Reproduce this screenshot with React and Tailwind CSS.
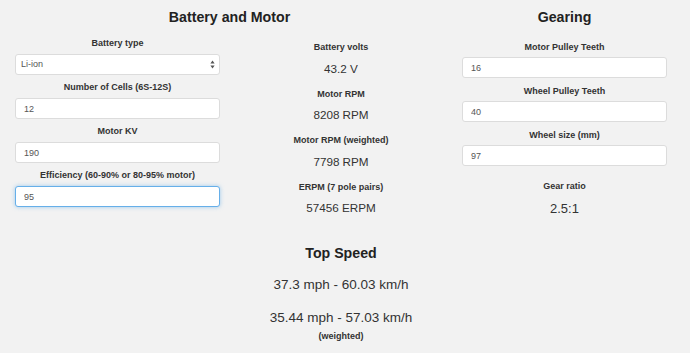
import { useState } from "react";

function Field({ label, value, onChange, focused }) {
  return (
    <div className="flex flex-col">
      <label className="h-[11px] text-center text-[9px] leading-[11px] font-bold text-[#333]">{label}</label>
      <input
        type="text"
        value={value}
        onChange={onChange}
        className={
          focused
            ? "mt-[5px] h-[21px] w-full rounded-[3px] border border-[#66afe9] bg-white px-[8px] text-[9px] text-[#555] shadow-[0_0_4px_rgba(102,175,233,0.6)] outline-none"
            : "mt-[5px] h-[21px] w-full rounded-[3px] border border-[#dcdcdc] bg-white px-[8px] text-[9px] text-[#555] outline-none"
        }
      />
    </div>
  );
}

function Stat({ label, value }) {
  return (
    <div className="flex flex-col items-center">
      <div className="h-[11px] text-[9px] leading-[11px] font-bold text-[#333]">{label}</div>
      <div className="mt-[8.5px] h-[14px] text-[11.7px] leading-[14px] text-[#333]">{value}</div>
    </div>
  );
}

export default function App() {
  const [form, setForm] = useState({
    battery: "Li-ion",
    cells: "12",
    kv: "190",
    efficiency: "95",
    motorTeeth: "16",
    wheelTeeth: "40",
    wheelSize: "97",
  });

  const set = (name) => (e) => setForm({ ...form, [name]: e.target.value });

  return (
    <div className="min-h-screen w-full bg-[#f2f2f2] font-['Liberation_Sans',Arial,sans-serif] text-[#333]">
      <div className="flex w-[682px]">
        {/* battery and motor */}
        <div className="w-[459px]">
          <h2 className="h-[26px] pt-[9px] text-center text-[14.2px] leading-[17px] font-bold text-[#222]">Battery and Motor</h2>
          <div className="flex">
            <div className="flex w-[235px] flex-col gap-[7px] px-[15px] pt-[12px]">
              <div className="flex flex-col">
                <label className="h-[11px] text-center text-[9px] leading-[11px] font-bold text-[#333]">Battery type</label>
                <div className="relative mt-[5px] h-[21px]">
                  <select
                    value={form.battery}
                    onChange={set("battery")}
                    className="block h-[21px] w-full appearance-none rounded-[3px] border border-[#dcdcdc] bg-white pl-[5px] text-[9px] text-[#555] outline-none"
                  >
                    <option>Li-ion</option>
                    <option>LiPo</option>
                  </select>
                  <svg className="pointer-events-none absolute right-[5px] top-[6px]" width="5" height="9" viewBox="0 0 5 9">
                    <path d="M2.5 0.5 L4.6 3.4 L0.4 3.4 Z" fill="#555" />
                    <path d="M2.5 8.5 L4.6 5.6 L0.4 5.6 Z" fill="#555" />
                  </svg>
                </div>
              </div>
              <Field label="Number of Cells (6S-12S)" value={form.cells} onChange={set("cells")} />
              <Field label="Motor KV" value={form.kv} onChange={set("kv")} />
              <Field label="Efficiency (60-90% or 80-95% motor)" value={form.efficiency} onChange={set("efficiency")} focused />
            </div>
            <div className="flex w-[212px] flex-col gap-[13px] pt-[16px]">
              <Stat label="Battery volts" value="43.2 V" />
              <Stat label="Motor RPM" value="8208 RPM" />
              <Stat label="Motor RPM (weighted)" value="7798 RPM" />
              <Stat label="ERPM (7 pole pairs)" value="57456 ERPM" />
            </div>
          </div>
        </div>

        {/* gearing */}
        <div className="ml-[3px] w-[205px]">
          <h2 className="h-[26px] pt-[9px] text-center text-[14.2px] leading-[17px] font-bold text-[#222]">Gearing</h2>
          <div className="flex flex-col gap-[8px] pt-[16px]">
            <div className="flex flex-col">
              <label className="h-[11px] text-center text-[9px] leading-[11px] font-bold text-[#333]">Motor Pulley Teeth</label>
              <input value={form.motorTeeth} onChange={set("motorTeeth")} className="mt-[4px] h-[21px] w-full rounded-[3px] border border-[#dcdcdc] bg-white px-[8px] text-[9px] text-[#555] outline-none" />
            </div>
            <div className="flex flex-col">
              <label className="h-[11px] text-center text-[9px] leading-[11px] font-bold text-[#333]">Wheel Pulley Teeth</label>
              <input value={form.wheelTeeth} onChange={set("wheelTeeth")} className="mt-[4px] h-[21px] w-full rounded-[3px] border border-[#dcdcdc] bg-white px-[8px] text-[9px] text-[#555] outline-none" />
            </div>
            <div className="flex flex-col">
              <label className="h-[11px] text-center text-[9px] leading-[11px] font-bold text-[#333]">Wheel size (mm)</label>
              <input value={form.wheelSize} onChange={set("wheelSize")} className="mt-[4px] h-[21px] w-full rounded-[3px] border border-[#dcdcdc] bg-white px-[8px] text-[9px] text-[#555] outline-none" />
            </div>
            <div className="mt-[6.5px] flex flex-col items-center">
              <div className="h-[11px] text-[9px] leading-[11px] font-bold text-[#333]">Gear ratio</div>
              <div className="mt-[9.5px] h-[16px] text-[13px] leading-[16px] text-[#333]">2.5:1</div>
            </div>
          </div>
        </div>
      </div>

      {/* top speed */}
      <div className="mt-[28px] flex w-[682px] flex-col items-center">
        <h2 className="h-[17px] text-[14.2px] leading-[17px] font-bold text-[#222]">Top Speed</h2>
        <div className="mt-[15px] h-[16px] text-[13.5px] leading-[16px] text-[#333]">37.3 mph - 60.03 km/h</div>
        <div className="mt-[17.3px] h-[16px] text-[13.5px] leading-[16px] text-[#333]">35.44 mph - 57.03 km/h</div>
        <div className="mt-[4.7px] h-[11px] text-[9px] leading-[11px] font-bold text-[#333]">(weighted)</div>
      </div>
    </div>
  );
}
